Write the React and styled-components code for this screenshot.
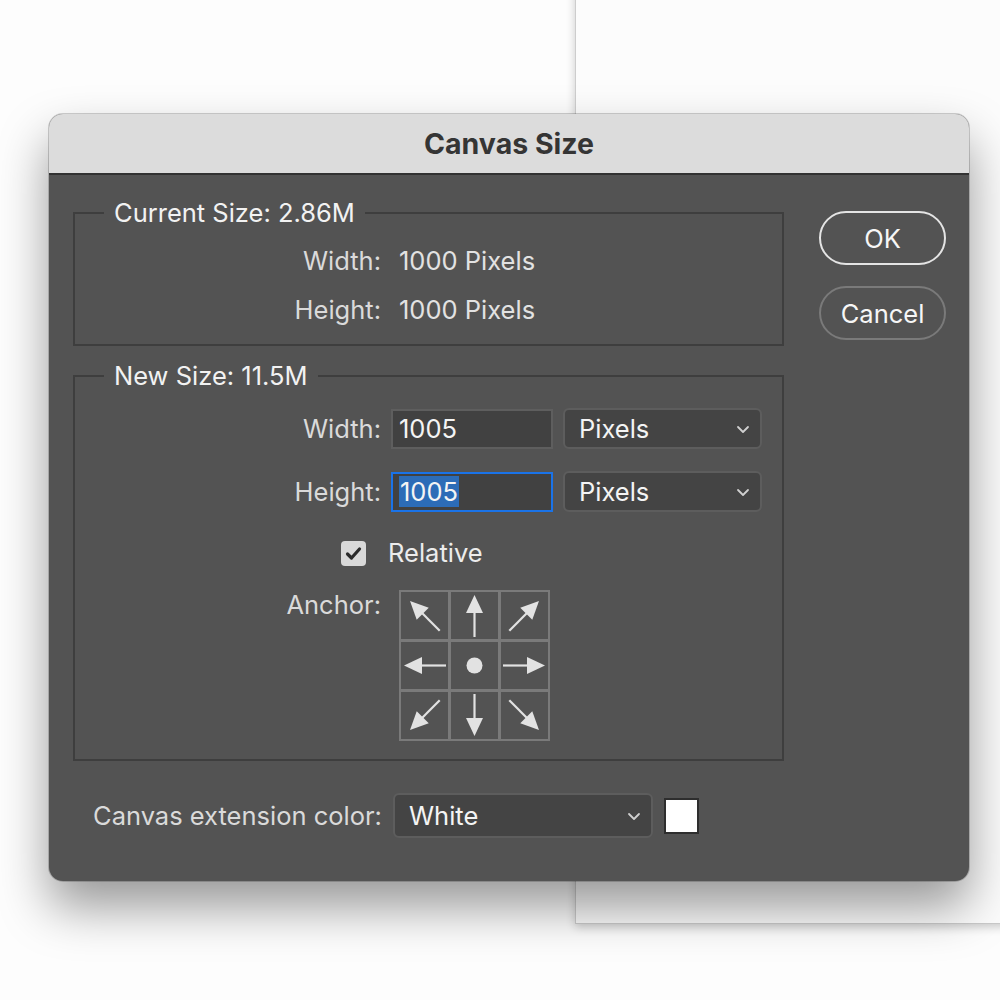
import React from "react"
import styled, { createGlobalStyle } from "styled-components"

const GlobalStyle = createGlobalStyle`
  html, body {
    margin: 0;
    padding: 0;
    background: #fdfdfd;
  }
  body {
    font-family: Inter, "Noto Sans", "Liberation Sans", sans-serif;
    -webkit-font-smoothing: antialiased;
  }
`

const Workspace = styled.div`
  position: relative;
  width: 1000px;
  height: 1000px;
  overflow: hidden;
  background: #fdfdfd;
`

// document sheet sitting behind the modal
const Sheet = styled.div`
  position: absolute;
  left: 575px;
  top: -20px;
  width: 460px;
  height: 943px;
  background: #fcfcfc;
  border-left: 1px solid #cdcdcd;
  border-bottom: 1px solid #cacaca;
  box-shadow: 0 3px 9px rgba(0, 0, 0, 0.2);
`

const Dialog = styled.div`
  position: absolute;
  left: 49px;
  top: 114px;
  width: 920px;
  height: 767px;
  border-radius: 14px;
  overflow: hidden;
  background: #535353;
  box-shadow: 0 26px 50px rgba(0, 0, 0, 0.4), 0 0 0 1px rgba(0, 0, 0, 0.18);
  display: flex;
  flex-direction: column;
`

const TitleBar = styled.div`
  height: 59px;
  flex: none;
  background: #dcdcdc;
  border-bottom: 2px solid #323232;
  display: flex;
  align-items: center;
  justify-content: center;
  font-size: 28.5px;
  font-weight: 700;
  color: #353535;
`

const Body = styled.div`
  flex: 1;
  display: grid;
  grid-template-columns: 711px 127px;
  column-gap: 35px;
  padding: 24px 23px 0 24px;
  align-content: start;
`

const Panels = styled.div`
  display: flex;
  flex-direction: column;
`

const Group = styled.fieldset`
  margin: ${p => p.$top || 0}px 0 0;
  padding: 0 0 ${p => p.$bottom || 0}px;
  border: 2px solid #3e3e3e;
  min-width: 0;
`

const Legend = styled.legend`
  margin-left: 29px;
  padding: 0 10px;
  font-size: 25.5px;
  line-height: 28px;
  color: #f2f2f2;
`

const Row = styled.div`
  display: grid;
  grid-template-columns: 306px ${p => p.$cols || "auto"};
  column-gap: ${p => p.$gap || 10}px;
  align-items: ${p => p.$align || "center"};
  margin-top: ${p => p.$top || 0}px;
`

const Label = styled.span`
  justify-self: end;
  font-size: 25.5px;
  line-height: 30px;
  color: #dadada;
`

const Value = styled.span`
  font-size: 25.5px;
  line-height: 30px;
  color: #e2e2e2;
`

const Field = styled.div`
  box-sizing: border-box;
  height: 40px;
  width: 162px;
  background: #414141;
  border: 2px solid ${p => (p.$focused ? "#1a73e8" : "#5e5e5e")};
  display: flex;
  align-items: center;
  padding-left: 6px;
  font-size: 25.5px;
  color: #f4f4f4;
`

const Selected = styled.span`
  background: #2c6cb7;
  padding: 2px 1px;
  line-height: 27px;
`

const Select = styled.div`
  box-sizing: border-box;
  width: ${p => p.$width}px;
  height: ${p => p.$height || 41}px;
  background: #444444;
  border: 2px solid #5d5d5d;
  border-radius: 6px;
  display: flex;
  align-items: center;
  justify-content: space-between;
  padding: 0 10px 0 14px;
  font-size: 25.5px;
  color: #f4f4f4;
`

const Check = styled.div`
  justify-self: end;
  margin-right: 15px;
  width: 25px;
  height: 25px;
  border-radius: 4px;
  background: #d9d9d9;
  display: flex;
  align-items: center;
  justify-content: center;
`

const CheckLabel = styled(Value)`
  margin-left: -3px;
  color: #ececec;
`

const AnchorGrid = styled.div`
  margin-left: 8px;
  display: grid;
  grid-template-columns: repeat(3, 47px);
  grid-template-rows: repeat(3, 47px);
  gap: 3px;
  padding: 2px;
  background: #7a7a7a;
  width: max-content;
`

const Cell = styled.div`
  background: #535353;
  display: flex;
  align-items: center;
  justify-content: center;
`

const ColorRow = styled.div`
  display: flex;
  align-items: center;
  margin: 32px 0 0 20px;
`

const ColorLabel = styled(Label)`
  margin-right: 11px;
`

const Swatch = styled.div`
  margin-left: 11px;
  width: 31px;
  height: 32px;
  background: #fff;
  border: 2px solid #2e2e2e;
`

const Buttons = styled.div`
  display: flex;
  flex-direction: column;
  gap: 21px;
  margin-top: 12px;
`

const Button = styled.button`
  width: 127px;
  height: 54px;
  border-radius: 27px;
  background: transparent;
  border: 2px solid ${p => (p.$primary ? "#e4e4e4" : "#7a7a7a")};
  color: #f6f6f6;
  font-family: inherit;
  font-size: 25.5px;
  padding: 0;
`

const Chevron = () => (
  <svg width="14" height="10" viewBox="0 0 14 10">
    <polyline points="2,3 7,8 12,3" fill="none" stroke="#d0d0d0" strokeWidth="1.8" strokeLinecap="round" strokeLinejoin="round" />
  </svg>
)

const Tick = () => (
  <svg width="19" height="19" viewBox="0 0 19 19">
    <path d="M3.5 10 L7.5 14 L15.5 5" fill="none" stroke="#2b2b2b" strokeWidth="3.2" strokeLinecap="round" strokeLinejoin="round" />
  </svg>
)

// one arrow pointing up, turned for each cell of the anchor grid
const Arrow = ({ angle }) => (
  <svg width="47" height="47" viewBox="0 0 47 47">
    <g transform={`rotate(${angle} 23.5 23.5)`}>
      <line x1="23.5" y1="20" x2="23.5" y2="45" stroke="#e2e2e2" strokeWidth="2.2" />
      <polygon points="23.5,3 32,21 15,21" fill="#e2e2e2" />
    </g>
  </svg>
)

const Dot = () => (
  <svg width="47" height="47" viewBox="0 0 47 47">
    <circle cx="23.5" cy="23.5" r="8" fill="#e2e2e2" />
  </svg>
)

const anchors = [-45, 0, 45, -90, null, 90, -135, 180, 135]

export default function App() {
  return (
    <>
      <GlobalStyle />
      <Workspace>
        <Sheet />
        <Dialog>
          <TitleBar>Canvas Size</TitleBar>
          <Body>
            <Panels>
              <Group $bottom={19}>
                <Legend>Current Size: 2.86M</Legend>
                <Row $gap={18} $top={19}>
                  <Label>Width:</Label>
                  <Value>1000 Pixels</Value>
                </Row>
                <Row $gap={18} $top={19}>
                  <Label>Height:</Label>
                  <Value>1000 Pixels</Value>
                </Row>
              </Group>

              <Group $top={16} $bottom={18}>
                <Legend>New Size: 11.5M</Legend>
                <Row $cols="162px 199px" $top={18}>
                  <Label>Width:</Label>
                  <Field>1005</Field>
                  <Select $width={199}>
                    Pixels
                    <Chevron />
                  </Select>
                </Row>
                <Row $cols="162px 199px" $top={22}>
                  <Label>Height:</Label>
                  <Field $focused>
                    <Selected>1005</Selected>
                  </Field>
                  <Select $width={199}>
                    Pixels
                    <Chevron />
                  </Select>
                </Row>
                <Row $top={26}>
                  <Check>
                    <Tick />
                  </Check>
                  <CheckLabel>Relative</CheckLabel>
                </Row>
                <Row $top={22} $align="start">
                  <Label>Anchor:</Label>
                  <AnchorGrid>
                    {anchors.map((a, i) => (
                      <Cell key={i}>{a === null ? <Dot /> : <Arrow angle={a} />}</Cell>
                    ))}
                  </AnchorGrid>
                </Row>
              </Group>

              <ColorRow>
                <ColorLabel>Canvas extension color:</ColorLabel>
                <Select $width={260} $height={45}>
                  White
                  <Chevron />
                </Select>
                <Swatch />
              </ColorRow>
            </Panels>

            <Buttons>
              <Button $primary>OK</Button>
              <Button>Cancel</Button>
            </Buttons>
          </Body>
        </Dialog>
      </Workspace>
    </>
  )
}
